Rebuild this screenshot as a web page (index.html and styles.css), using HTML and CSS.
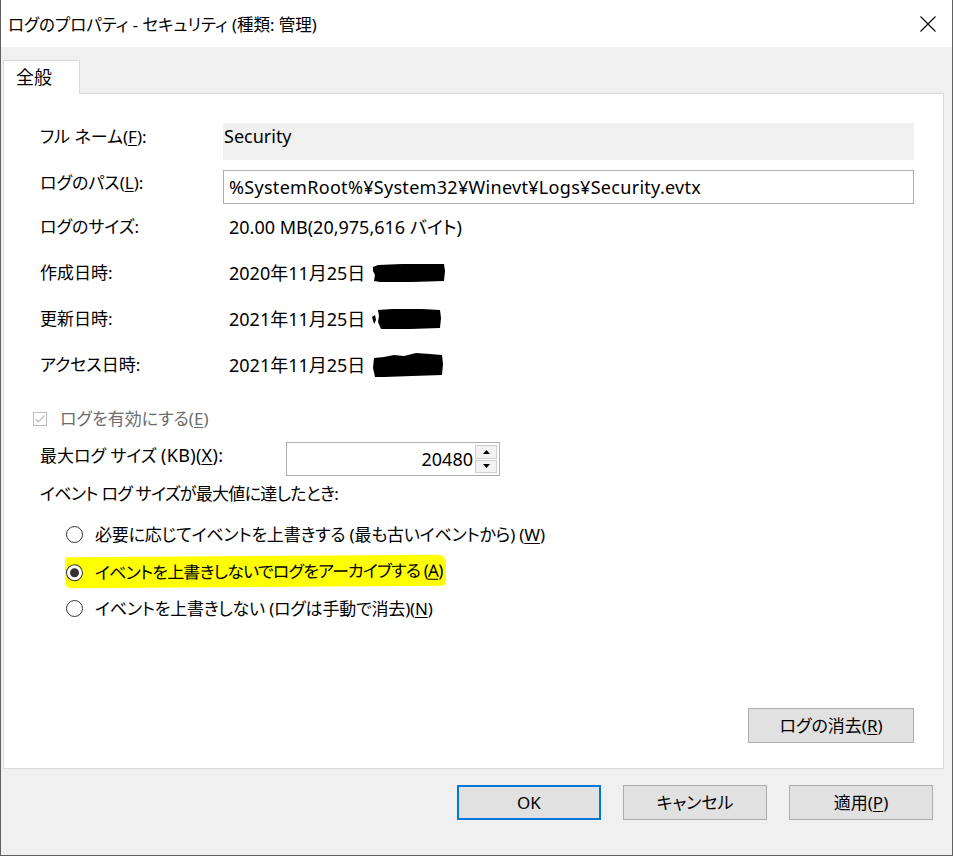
FILE: index.html
```html
<!DOCTYPE html>
<html lang="ja">
<head>
    <meta charset="UTF-8">
    <meta name="viewport" content="width=device-width, initial-scale=1.0">
    <title>ログのプロパティ - セキュリティ (種類: 管理)</title>
    <link rel="stylesheet" href="styles.css">
</head>
<body>
    <div class="window">
        <div class="titlebar">
            <span class="title">ログのプロパティ - セキュリティ (種類: 管理)</span>
            <svg class="close" width="16" height="16" viewBox="0 0 16 16">
                <path d="M0.5 0.5 L15.5 15.5 M15.5 0.5 L0.5 15.5" stroke="#000" stroke-width="1.1" fill="none"/>
            </svg>
        </div>

        <div class="dialog-body">
            <div class="tabs">
                <div class="tab">全般</div>
            </div>

            <div class="pane">
                <div class="row row-name">
                    <div class="label">フル ネーム(<u>F</u>):</div>
                    <div class="readonly-box">Security</div>
                </div>
                <div class="row row-path">
                    <div class="label">ログのパス(<u>L</u>):</div>
                    <div class="text-box">%SystemRoot%¥System32¥Winevt¥Logs¥Security.evtx</div>
                </div>
                <div class="row row-info">
                    <div class="label">ログのサイズ:</div>
                    <div class="value">20.00 MB(20,975,616 バイト)</div>
                </div>
                <div class="row row-info">
                    <div class="label">作成日時:</div>
                    <div class="value">2020年11月25日
                        <svg class="redact" width="74" height="20" viewBox="0 0 74 20">
                            <path d="M1 4 L6 2 L30 1 L72 1 L73 8 L72 18 L40 19 L8 19 L2 18 L3 12 L1 8 Z" fill="#000"/>
                        </svg>
                    </div>
                </div>
                <div class="row row-info">
                    <div class="label">更新日時:</div>
                    <div class="value">2021年11月25日
                        <svg class="redact" width="74" height="22" viewBox="0 0 74 22">
                            <path d="M0 9 L3 7 L4 12 L2 16 Z M6 2 L20 1 L50 1 L68 2 L69 10 L68 20 L38 21 L9 21 L6 14 L7 8 Z" fill="#000"/>
                        </svg>
                    </div>
                </div>
                <div class="row row-info">
                    <div class="label">アクセス日時:</div>
                    <div class="value">2021年11月25日
                        <svg class="redact" width="74" height="26" viewBox="0 0 74 26">
                            <path d="M2 6 L12 5 L22 3 L32 4 L44 1 L58 2 L70 3 L71 12 L70 23 L40 24 L12 25 L3 25 L1 16 Z" fill="#000"/>
                        </svg>
                    </div>
                </div>

                <div class="check-row">
                    <span class="checkbox">
                        <svg width="12" height="12" viewBox="0 0 12 12">
                            <path d="M1.5 6 L4.5 9 L10.5 2.5" stroke="#bcbcbc" stroke-width="1.2" fill="none"/>
                        </svg>
                    </span>
                    <span class="disabled">ログを有効にする(<u>E</u>)</span>
                </div>

                <div class="size-row">
                    <div class="size-label">最大ログ サイズ <span class="latin">(KB)(<u>X</u>):</span></div>
                    <div class="spin">
                        <span class="spin-value">20480</span>
                        <span class="spin-buttons">
                            <span class="spin-btn">
                                <svg width="7" height="4" viewBox="0 0 7 4"><path d="M0 4 L3.5 0 L7 4 Z" fill="#000"/></svg>
                            </span>
                            <span class="spin-btn">
                                <svg width="7" height="4" viewBox="0 0 7 4"><path d="M0 0 L3.5 4 L7 0 Z" fill="#000"/></svg>
                            </span>
                        </span>
                    </div>
                </div>

                <div class="when">イベント ログ サイズが最大値に達したとき:</div>

                <div class="radios">
                    <div class="radio-row">
                        <span class="radio"></span>
                        <span>必要に応じてイベントを上書きする (最も古いイベントから) (<u>W</u>)</span>
                    </div>
                    <div class="radio-row">
                        <span class="highlight">
                            <span class="radio checked"></span>
                            <span class="tight">イベントを上書きしないでログをアーカイブする (<u>A</u>)</span>
                        </span>
                    </div>
                    <div class="radio-row">
                        <span class="radio"></span>
                        <span>イベントを上書きしない (ログは手動で消去)(<u>N</u>)</span>
                    </div>
                </div>

                <div class="pane-actions">
                    <button class="btn">ログの消去(<u>R</u>)</button>
                </div>
            </div>

            <div class="footer">
                <button class="btn btn-default">OK</button>
                <button class="btn">キャンセル</button>
                <button class="btn">適用(<u>P</u>)</button>
            </div>
        </div>
    </div>
</body>
</html>
```

FILE: styles.css
```css
* {
    box-sizing: border-box;
}

body {
    margin: 0;
    font-family: "Noto Sans", "Noto Sans CJK JP", sans-serif;
    font-feature-settings: "palt";
    font-size: 17px;
    color: #000;
    background: #fff;
}

u {
    text-decoration-thickness: 1px;
    text-underline-offset: 2px;
}

.window {
    width: 953px;
    height: 856px;
    border-left: 1px solid #606060;
    border-right: 1px solid #606060;
    border-bottom: 1px solid #606060;
    background: #f0f0f0;
    display: flex;
    flex-direction: column;
}

.titlebar {
    height: 47px;
    background: #fff;
    display: flex;
    align-items: center;
    justify-content: space-between;
    padding: 2px 16px 0 7px;
}

.title {
    font-size: 16.5px;
    line-height: 20px;
}

.close {
    display: block;
    margin-top: -1px;
}

.dialog-body {
    flex: 1;
    padding: 13px 8px 0 2px;
    display: flex;
    flex-direction: column;
}

.tabs {
    display: flex;
    height: 33px;
}

.tab {
    position: relative;
    z-index: 1;
    width: 77px;
    height: 34px;
    background: #fff;
    border: 1px solid #d9d9d9;
    border-bottom: none;
    padding: 5px 0 0 12px;
    font-size: 18px;
    line-height: 22px;
}

.pane {
    height: 676px;
    background: #fff;
    border: 1px solid #d9d9d9;
    padding: 29px 29px 25px 36px;
    display: flex;
    flex-direction: column;
}

.row {
    display: flex;
}

.label {
    width: 183px;
    flex-shrink: 0;
    line-height: 22px;
}

.row-name {
    height: 37px;
}

.row-name .label {
    padding-top: 3px;
}

.readonly-box {
    flex: 1;
    background: #f0f0f0;
    padding: 2px 1px 0;
    font-size: 18px;
    line-height: 22px;
}

.row-path {
    height: 34px;
    margin-top: 10px;
}

.row-path .label {
    padding-top: 2px;
}

.text-box {
    flex: 1;
    border: 1px solid #adadad;
    padding: 5px 5px 0;
    font-size: 18px;
    line-height: 22px;
    letter-spacing: 0.3px;
}

.row-info {
    height: 46px;
    align-items: center;
}

.row-info:first-of-type {
    margin-top: 1px;
}

.value {
    padding-left: 6px;
    font-size: 18px;
    line-height: 22px;
    display: flex;
    align-items: center;
    gap: 7px;
}

.redact {
    display: block;
}

.check-row {
    display: flex;
    align-items: center;
    height: 22px;
    margin-top: 20px;
    margin-left: -7px;
    line-height: 22px;
}

.checkbox {
    width: 14px;
    height: 14px;
    border: 1px solid #bcbcbc;
    display: flex;
    align-items: center;
    justify-content: center;
    margin-right: 13px;
}

.disabled {
    color: #6d6d6d;
}

.size-row {
    display: flex;
    align-items: center;
    height: 34px;
    margin-top: 12px;
}

.size-label {
    width: 246px;
    line-height: 22px;
    margin-top: -8px;
}

.latin {
    font-size: 18px;
    letter-spacing: 0.3px;
}

.spin {
    width: 214px;
    height: 34px;
    border: 1px solid #adadad;
    display: flex;
    align-items: center;
    justify-content: flex-end;
    padding: 2px;
}

.spin-value {
    font-size: 18px;
    line-height: 22px;
    padding-right: 2px;
}

.spin-buttons {
    display: flex;
    flex-direction: column;
    gap: 1px;
    width: 22px;
    height: 28px;
}

.spin-btn {
    flex: 1;
    border: 1px solid #cfcfcf;
    background: #f3f3f3;
    display: flex;
    align-items: center;
    justify-content: center;
}

.spin-btn svg {
    display: block;
}

.when {
    margin-top: 7px;
    line-height: 22px;
    letter-spacing: -0.7px;
}

.radios {
    margin-top: 11px;
    padding-left: 25px;
    letter-spacing: -0.2px;
}

.radio-row {
    height: 37px;
    display: flex;
    align-items: center;
    line-height: 22px;
}

.radio-row > .radio {
    margin-left: 1px;
}

.radio {
    width: 17px;
    height: 17px;
    border: 1px solid #333;
    border-radius: 50%;
    background: #fff;
    margin-right: 12px;
    flex-shrink: 0;
    display: flex;
    align-items: center;
    justify-content: center;
}

.radio.checked::after {
    content: "";
    width: 9px;
    height: 9px;
    border-radius: 50%;
    background: #333;
}

.highlight {
    display: flex;
    align-items: center;
    height: 31px;
    background: #ffff00;
    padding: 0 4px 0 1px;
    border-radius: 3px 8px 4px 6px;
    transform: skewY(-0.4deg);
}

.tight {
    letter-spacing: -0.8px;
}

.pane-actions {
    margin-top: auto;
    display: flex;
    justify-content: flex-end;
}

.btn {
    width: 166px;
    height: 35px;
    font: inherit;
    font-size: 17px;
    line-height: 22px;
    color: #000;
    background: #e1e1e1;
    border: 1px solid #adadad;
    padding: 0;
}

.footer {
    display: flex;
    justify-content: flex-end;
    gap: 22px;
    padding: 16px 11px 0 0;
}

.footer .btn {
    width: 144px;
    height: 35px;
}

.btn-default {
    border: 2px solid #0078d7;
}
```
